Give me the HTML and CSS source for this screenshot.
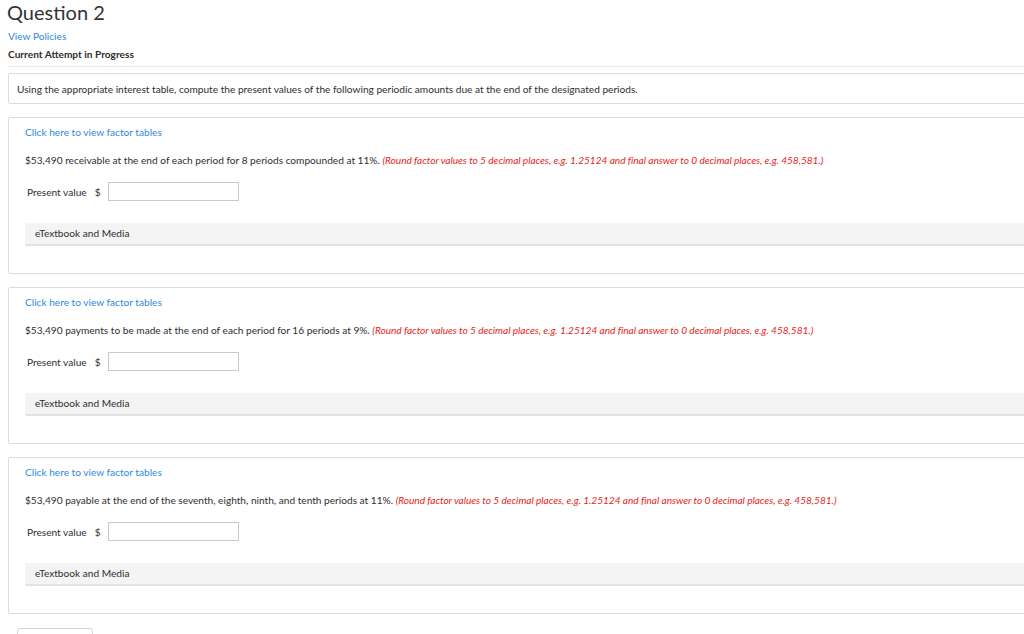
FILE: index.html
```html
<!DOCTYPE html>
<html lang="en">
<head>
<meta charset="utf-8">
<title>Question 2</title>
<link rel="stylesheet" href="styles.css">
</head>
<body>
<div class="page">
  <h1 class="title">Question 2</h1>
  <a class="policies" href="#">View Policies</a>
  <div class="attempt">Current Attempt in Progress</div>
  <hr class="sep">
  <div class="intro">Using the appropriate interest table, compute the present values of the following periodic amounts due at the end of the designated periods.</div>

  <div class="part">
    <a class="link" href="#">Click here to view factor tables</a>
    <p class="q">$53,490 receivable at the end of each period for 8 periods compounded at 11%. <em class="hint">(Round factor values to 5 decimal places, e.g. 1.25124 and final answer to 0 decimal places, e.g. 458,581.)</em></p>
    <div class="row"><span class="label">Present value</span><span class="cur">$</span><input class="field" type="text"></div>
    <div class="bar">eTextbook and Media</div>
  </div>

  <div class="part">
    <a class="link" href="#">Click here to view factor tables</a>
    <p class="q">$53,490 payments to be made at the end of each period for 16 periods at 9%. <em class="hint">(Round factor values to 5 decimal places, e.g. 1.25124 and final answer to 0 decimal places, e.g. 458,581.)</em></p>
    <div class="row"><span class="label">Present value</span><span class="cur">$</span><input class="field" type="text"></div>
    <div class="bar">eTextbook and Media</div>
  </div>

  <div class="part">
    <a class="link" href="#">Click here to view factor tables</a>
    <p class="q">$53,490 payable at the end of the seventh, eighth, ninth, and tenth periods at 11%. <em class="hint">(Round factor values to 5 decimal places, e.g. 1.25124 and final answer to 0 decimal places, e.g. 458,581.)</em></p>
    <div class="row"><span class="label">Present value</span><span class="cur">$</span><input class="field" type="text"></div>
    <div class="bar">eTextbook and Media</div>
  </div>

  <div class="actions"><button class="btn" type="button"></button></div>
</div>
</body>
</html>
```
FILE: styles.css
```css
html, body {
  margin: 0;
  padding: 0;
  background: #ffffff;
  overflow: hidden;
}
body {
  font-family: Lato, "Open Sans", "Liberation Sans", sans-serif;
  color: #2e2e2e;
  font-size: 10.15px;
  line-height: 14px;
}
.page {
  width: 1100px;
  padding-left: 8px;
}
.title {
  margin: 0;
  font-size: 20px;
  font-weight: 400;
  line-height: 24px;
  color: #333333;
  margin-left: -1px;
}
.policies {
  display: block;
  margin-top: 5px;
  color: #2d8ae0;
  text-decoration: none;
}
.attempt {
  margin-top: 4px;
  font-weight: 700;
  color: #2d2d2d;
}
.sep {
  margin: 5px 0 0 0;
  border: 0;
  border-top: 1px solid #e9e9e9;
  height: 0;
}
.intro {
  margin-top: 6px;
  border: 1px solid #dcdcdc;
  border-radius: 2px;
  padding: 8px 8px 7px 8px;
}
.part {
  margin-top: 13px;
  border: 1px solid #dcdcdc;
  border-radius: 2px;
  padding: 7px 16px 27px 16px;
}
.link {
  display: block;
  color: #2d8ae0;
  text-decoration: none;
}
.q {
  margin: 14px 0 0 0;
}
.hint {
  color: #e8241c;
  font-style: italic;
  letter-spacing: -0.04px;
}
.row {
  margin-top: 15px;
  display: flex;
  align-items: center;
  height: 19px;
}
.label {
  margin-left: 2px;
  margin-right: 8px;
}
.cur {
  margin-right: 7px;
}
.field {
  box-sizing: border-box;
  width: 131px;
  height: 19px;
  margin: 0;
  border: 1px solid #c9c9c9;
  border-radius: 0;
  padding: 0 4px;
  background: #ffffff;
}
.bar {
  margin-top: 22px;
  height: 21px;
  line-height: 21px;
  padding-left: 10px;
  background: #f4f4f4;
  border-bottom: 2px solid #e2e2e2;
  border-radius: 2px 0 0 2px;
}
.actions {
  margin-top: 14px;
  padding-left: 9px;
}
.btn {
  display: block;
  width: 76px;
  height: 30px;
  border: 1px solid #d4d4d4;
  border-radius: 3px;
  background: #ffffff;
}
```
